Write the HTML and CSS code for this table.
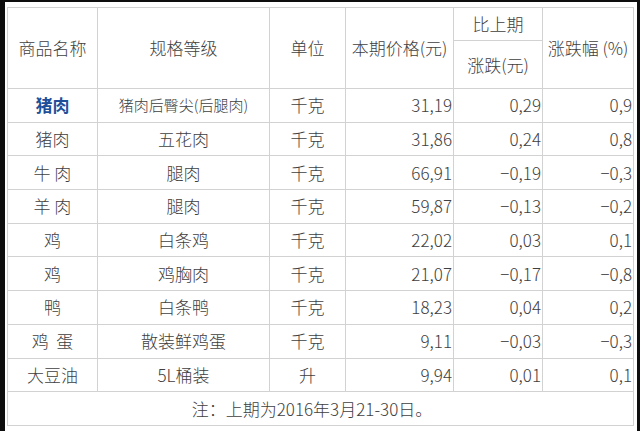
FILE: index.html
```html
<!DOCTYPE html>
<html lang="zh-CN">
<head>
<meta charset="utf-8">
<title>价格表</title>
<link rel="stylesheet" href="styles.css">
</head>
<body>
<div class="page">
<table class="price">
  <colgroup>
    <col class="c1"><col class="c2"><col class="c3"><col class="c4"><col class="c5"><col class="c6">
  </colgroup>
  <thead>
    <tr class="h1">
      <th rowspan="2">商品名称</th>
      <th rowspan="2">规格等级</th>
      <th rowspan="2">单位</th>
      <th rowspan="2" class="tight">本期价格(元)</th>
      <th>比上期</th>
      <th rowspan="2" class="tight">涨跌幅 (%)</th>
    </tr>
    <tr class="h2">
      <th>涨跌(元)</th>
    </tr>
  </thead>
  <tbody>
    <tr><td class="blue">猪肉</td><td class="small">猪肉后臀尖(后腿肉)</td><td>千克</td><td class="num">31,19</td><td class="num">0,29</td><td class="num">0,9</td></tr>
    <tr><td>猪肉</td><td>五花肉</td><td>千克</td><td class="num">31,86</td><td class="num">0,24</td><td class="num">0,8</td></tr>
    <tr><td>牛 肉</td><td>腿肉</td><td>千克</td><td class="num">66,91</td><td class="num">−0,19</td><td class="num">−0,3</td></tr>
    <tr><td>羊 肉</td><td>腿肉</td><td>千克</td><td class="num">59,87</td><td class="num">−0,13</td><td class="num">−0,2</td></tr>
    <tr><td>鸡</td><td>白条鸡</td><td>千克</td><td class="num">22,02</td><td class="num">0,03</td><td class="num">0,1</td></tr>
    <tr><td>鸡</td><td>鸡胸肉</td><td>千克</td><td class="num">21,07</td><td class="num">−0,17</td><td class="num">−0,8</td></tr>
    <tr><td>鸭</td><td>白条鸭</td><td>千克</td><td class="num">18,23</td><td class="num">0,04</td><td class="num">0,2</td></tr>
    <tr><td>鸡 &nbsp;蛋</td><td>散装鲜鸡蛋</td><td>千克</td><td class="num">9,11</td><td class="num">−0,03</td><td class="num">−0,3</td></tr>
    <tr><td>大豆油</td><td>5L桶装</td><td>升</td><td class="num">9,94</td><td class="num">0,01</td><td class="num">0,1</td></tr>
    <tr><td colspan="6" class="note">注：上期为2016年3月21-30日。</td></tr>
  </tbody>
</table>
</div>
</body>
</html>
```
FILE: styles.css
```css
html, body {
  margin: 0;
  padding: 0;
  background: #0e0e0e;
  width: 640px;
  height: 431px;
  overflow: hidden;
}
.page {
  margin: 2px 0 0 5px;
  width: 632px;
  height: 429px;
  background: #fff;
  padding: 5px 0 0 2px;
  box-sizing: border-box;
}
.price {
  border-collapse: collapse;
  table-layout: fixed;
  width: 626px;
  font-family: "Noto Sans CJK SC", "Noto Sans", sans-serif;
  font-size: 17px;
  font-weight: 300;
  color: #404040;
  border: 1px solid #c4c4c4;
}
.c1 { width: 90px; }
.c2 { width: 172px; }
.c3 { width: 76px; }
.c4 { width: 108px; }
.c5 { width: 89px; }
.c6 { width: 91px; }
.price th, .price td {
  border: 1px solid #d2d2d2;
  padding: 0 1px;
  font-weight: 300;
  text-align: center;
  vertical-align: middle;
  line-height: 20px;
  white-space: nowrap;
  overflow: hidden;
}
.price .tight { padding: 0; }
.h1 { height: 33px; }
.h2 { height: 48px; }
.price tbody tr { height: 33.7px; }
.price td.num { text-align: right; padding-right: 1px; }
.price td.blue { color: #1f4f99; font-weight: 700; }
.price td.small { font-size: 15px; }
.price td.note { padding-right: 18px; }
```
